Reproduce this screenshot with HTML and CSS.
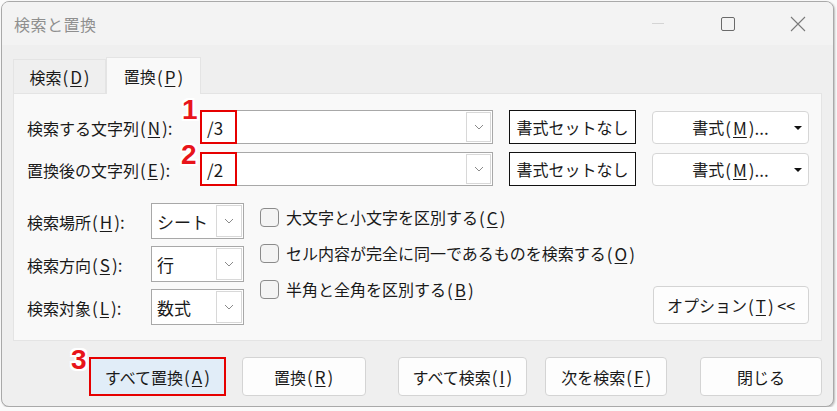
FILE: index.html
```html
<!DOCTYPE html>
<html lang="ja">
<head>
    <meta charset="UTF-8">
    <meta name="viewport" content="width=device-width, initial-scale=1.0">
    <title>検索と置換</title>
    <link rel="stylesheet" href="styles.css">
</head>
<body>
    <div class="window">
        <div class="titlebar">
            <span class="title">検索と置換</span>
            <div class="controls">
                <span class="ctrl"><span class="min"></span></span>
                <span class="ctrl"><span class="max"></span></span>
                <span class="ctrl">
                    <svg width="16" height="16" viewBox="0 0 16 16"><path d="M1 1 L15 15 M15 1 L1 15" stroke="#7a7a7a" stroke-width="1.1" fill="none"/></svg>
                </span>
            </div>
        </div>

        <div class="content">
            <div class="tabs">
                <div class="tab">検索<span class="key">(<u>D</u>)</span></div>
                <div class="tab active">置換<span class="key">(<u>P</u>)</span></div>
            </div>

            <div class="panel">
                <div class="row">
                    <div class="label">検索する文字列<span class="key">(<u>N</u>):</span></div>
                    <div class="combo">
                        <span class="mark mark-1">1</span>
                        <span class="combo-text hl">/3</span>
                        <span class="drop"><svg width="10" height="6" viewBox="0 0 10 6"><polyline points="1,1 5,5 9,1" stroke="#8a8a8a" fill="none"/></svg></span>
                    </div>
                    <div class="fmt-none">書式セットなし</div>
                    <div class="fmt-btn">書式<span class="key">(<u>M</u>)...</span><span class="caret"></span></div>
                </div>
                <div class="row row-2">
                    <div class="label">置換後の文字列<span class="key">(<u>E</u>):</span></div>
                    <div class="combo">
                        <span class="mark mark-2">2</span>
                        <span class="combo-text hl">/2</span>
                        <span class="drop"><svg width="10" height="6" viewBox="0 0 10 6"><polyline points="1,1 5,5 9,1" stroke="#8a8a8a" fill="none"/></svg></span>
                    </div>
                    <div class="fmt-none">書式セットなし</div>
                    <div class="fmt-btn">書式<span class="key">(<u>M</u>)...</span><span class="caret"></span></div>
                </div>

                <div class="lower">
                    <div class="selects">
                        <div class="sel-row">
                            <div class="sel-label">検索場所<span class="key">(<u>H</u>):</span></div>
                            <div class="select"><span class="sel-text">シート</span><span class="sel-drop"><svg width="10" height="6" viewBox="0 0 10 6"><polyline points="1,1 5,5 9,1" stroke="#8a8a8a" fill="none"/></svg></span></div>
                        </div>
                        <div class="sel-row">
                            <div class="sel-label">検索方向<span class="key">(<u>S</u>):</span></div>
                            <div class="select"><span class="sel-text">行</span><span class="sel-drop"><svg width="10" height="6" viewBox="0 0 10 6"><polyline points="1,1 5,5 9,1" stroke="#8a8a8a" fill="none"/></svg></span></div>
                        </div>
                        <div class="sel-row">
                            <div class="sel-label">検索対象<span class="key">(<u>L</u>):</span></div>
                            <div class="select"><span class="sel-text">数式</span><span class="sel-drop"><svg width="10" height="6" viewBox="0 0 10 6"><polyline points="1,1 5,5 9,1" stroke="#8a8a8a" fill="none"/></svg></span></div>
                        </div>
                    </div>
                    <div class="checks">
                        <div class="check"><span class="box"></span>大文字と小文字を区別する<span class="key">(<u>C</u>)</span></div>
                        <div class="check"><span class="box"></span>セル内容が完全に同一であるものを検索する<span class="key">(<u>O</u>)</span></div>
                        <div class="check"><span class="box"></span>半角と全角を区別する<span class="key">(<u>B</u>)</span></div>
                    </div>
                    <div class="btn options">オプション<span class="key">(<u>T</u>)</span>&nbsp;&lt;&lt;</div>
                </div>
            </div>

            <div class="footer">
                <div class="btn replace-all"><span class="mark mark-3">3</span>すべて置換<span class="key">(<u>A</u>)</span></div>
                <div class="btn replace">置換<span class="key">(<u>R</u>)</span></div>
                <div class="btn find-all">すべて検索<span class="key">(<u>I</u>)</span></div>
                <div class="btn find-next">次を検索<span class="key">(<u>F</u>)</span></div>
                <div class="btn close">閉じる</div>
            </div>
        </div>
    </div>
</body>
</html>
```

FILE: styles.css
```css
body {
    margin: 0;
    background: #fafafa;
    font-family: "Noto Sans CJK JP", "Noto Sans", sans-serif;
    font-size: 16px;
    color: #1a1a1a;
}
u {
    text-decoration-thickness: 1px;
    text-underline-offset: 2px;
    margin: 0 2px;
}
/* アクセスキー部分は UI フォントに合わせて少し大きめ */
.key {
    font-size: 17px;
    padding-left: 1px;
}
.window {
    width: 833px;
    height: 406px;
    margin: 1px 0 0 1px;
    box-sizing: border-box;
    border: 1px solid #a9a9a9;
    border-radius: 8px;
    background: #efefef;
    overflow: hidden;
    box-shadow: 1px 1px 2px rgba(0,0,0,0.25);
}
.titlebar {
    height: 43px;
    background: #f3f3f3;
    display: flex;
    align-items: center;
}
.title {
    padding-left: 12px;
    color: #8f8f8f;
    font-size: 16px;
    letter-spacing: 0.5px;
}
.controls {
    margin-left: auto;
    display: flex;
}
.ctrl {
    width: 70px;
    height: 43px;
    display: flex;
    align-items: center;
    justify-content: center;
}
.min {
    width: 12px;
    height: 1px;
    background: #d4d4d4;
}
.max {
    width: 12px;
    height: 12px;
    border: 1px solid #6a6a6a;
    border-radius: 2px;
}
.content {
    padding: 12px 11px 0 11px;
}
.tabs {
    display: flex;
    align-items: flex-end;
    height: 36px;
}
.tab {
    height: 34px;
    box-sizing: border-box;
    border: 1px solid #e4e4e4;
    border-bottom: none;
    display: flex;
    align-items: center;
    justify-content: center;
    width: 93px;
}
.tab.active {
    width: 95px;
    height: 37px;
    background: #f9f9f9;
    margin-bottom: -1px;
    position: relative;
}
.panel {
    width: 809px;
    height: 248px;
    box-sizing: border-box;
    border: 1px solid #e4e4e4;
    background: #f9f9f9;
    padding: 16px 12px 0 13px;
}
.row {
    display: flex;
    align-items: center;
    height: 34px;
}
.row-2 {
    margin-top: 8px;
}
.label {
    width: 173px;
    white-space: nowrap;
}
.combo {
    position: relative;
    width: 293px;
    height: 34px;
    box-sizing: border-box;
    border: 1px solid #a8a8a8;
    background: #fff;
    display: flex;
    align-items: center;
}
.combo-text {
    padding-left: 5px;
    font-size: 17px;
}
.hl {
    position: absolute;
    left: -1px;
    top: -1px;
    width: 37px;
    height: 34px;
    box-sizing: border-box;
    border: 2px solid #e60000;
    display: flex;
    align-items: center;
}
.drop {
    margin-left: auto;
    margin-right: 1px;
    width: 25px;
    height: 30px;
    box-sizing: border-box;
    border: 1px solid #d8d8d8;
    display: flex;
    align-items: center;
    justify-content: center;
}
.mark {
    position: absolute;
    font-family: "Liberation Sans", Arial, sans-serif;
    font-weight: bold;
    font-size: 28px;
    color: #e8141b;
    text-shadow: -2px -2px 0 #fff, 2px -2px 0 #fff, -2px 2px 0 #fff, 2px 2px 0 #fff, 0 2px 0 #fff, 2px 0 0 #fff, -2px 0 0 #fff, 0 -2px 0 #fff;
    line-height: 1;
    z-index: 1;
}
.mark-1 {
    left: -19px;
    top: -15px;
}
.mark-2 {
    left: -20px;
    top: -12px;
}
.mark-3 {
    left: -20px;
    top: -13px;
}
.fmt-none {
    margin-left: 16px;
    width: 127px;
    height: 34px;
    box-sizing: border-box;
    border: 1px solid #111;
    background: #fff;
    display: flex;
    align-items: center;
    justify-content: center;
}
.fmt-btn {
    position: relative;
    margin-left: 16px;
    width: 157px;
    height: 33px;
    box-sizing: border-box;
    border: 1px solid #d6d6d6;
    border-radius: 4px;
    background: #fff;
    display: flex;
    align-items: center;
    justify-content: center;
}
.caret {
    position: absolute;
    right: 6px;
    top: 14px;
    border-left: 4px solid transparent;
    border-right: 4px solid transparent;
    border-top: 4px solid #111;
}
.lower {
    margin-top: 17px;
    display: flex;
}
.selects {
    display: flex;
    flex-direction: column;
    gap: 7px;
}
.sel-row {
    display: flex;
    align-items: center;
}
.sel-label {
    width: 124px;
    white-space: nowrap;
}
.select {
    width: 93px;
    height: 36px;
    box-sizing: border-box;
    border: 1px solid #a8a8a8;
    background: #fff;
    display: flex;
    align-items: center;
}
.sel-text {
    padding-left: 5px;
    font-size: 17px;
}
.sel-drop {
    margin-left: auto;
    margin-right: 1px;
    width: 26px;
    height: 32px;
    box-sizing: border-box;
    border: 1px solid #d8d8d8;
    display: flex;
    align-items: center;
    justify-content: center;
}
.checks {
    margin-left: 16px;
    padding-top: 1px;
    display: flex;
    flex-direction: column;
    gap: 10px;
    flex: 1;
}
.check {
    height: 26px;
    display: flex;
    align-items: center;
    white-space: nowrap;
}
.box {
    width: 19px;
    height: 19px;
    box-sizing: border-box;
    border: 1px solid #8b8b8b;
    border-radius: 4px;
    background: #f4f4f4;
    margin-right: 7px;
}
.btn {
    position: relative;
    box-sizing: border-box;
    border: 1px solid #d4d4d4;
    border-radius: 4px;
    background: #fdfdfd;
    display: flex;
    align-items: center;
    justify-content: center;
    white-space: nowrap;
}
.options {
    align-self: flex-end;
    margin-bottom: 1px;
    width: 156px;
    height: 38px;
}
.footer {
    display: flex;
    padding: 16px 0 0 76px;
}
.footer .btn {
    height: 39px;
}
.replace-all {
    width: 137px;
    border: 2px solid #e60000;
    border-radius: 0;
    background: #e1edf8;
}
.replace {
    width: 124px;
    margin-left: 16px;
}
.find-all {
    width: 130px;
    margin-left: 32px;
}
.find-next {
    width: 122px;
    margin-left: 18px;
}
.close {
    width: 122px;
    margin-left: 33px;
}
```
